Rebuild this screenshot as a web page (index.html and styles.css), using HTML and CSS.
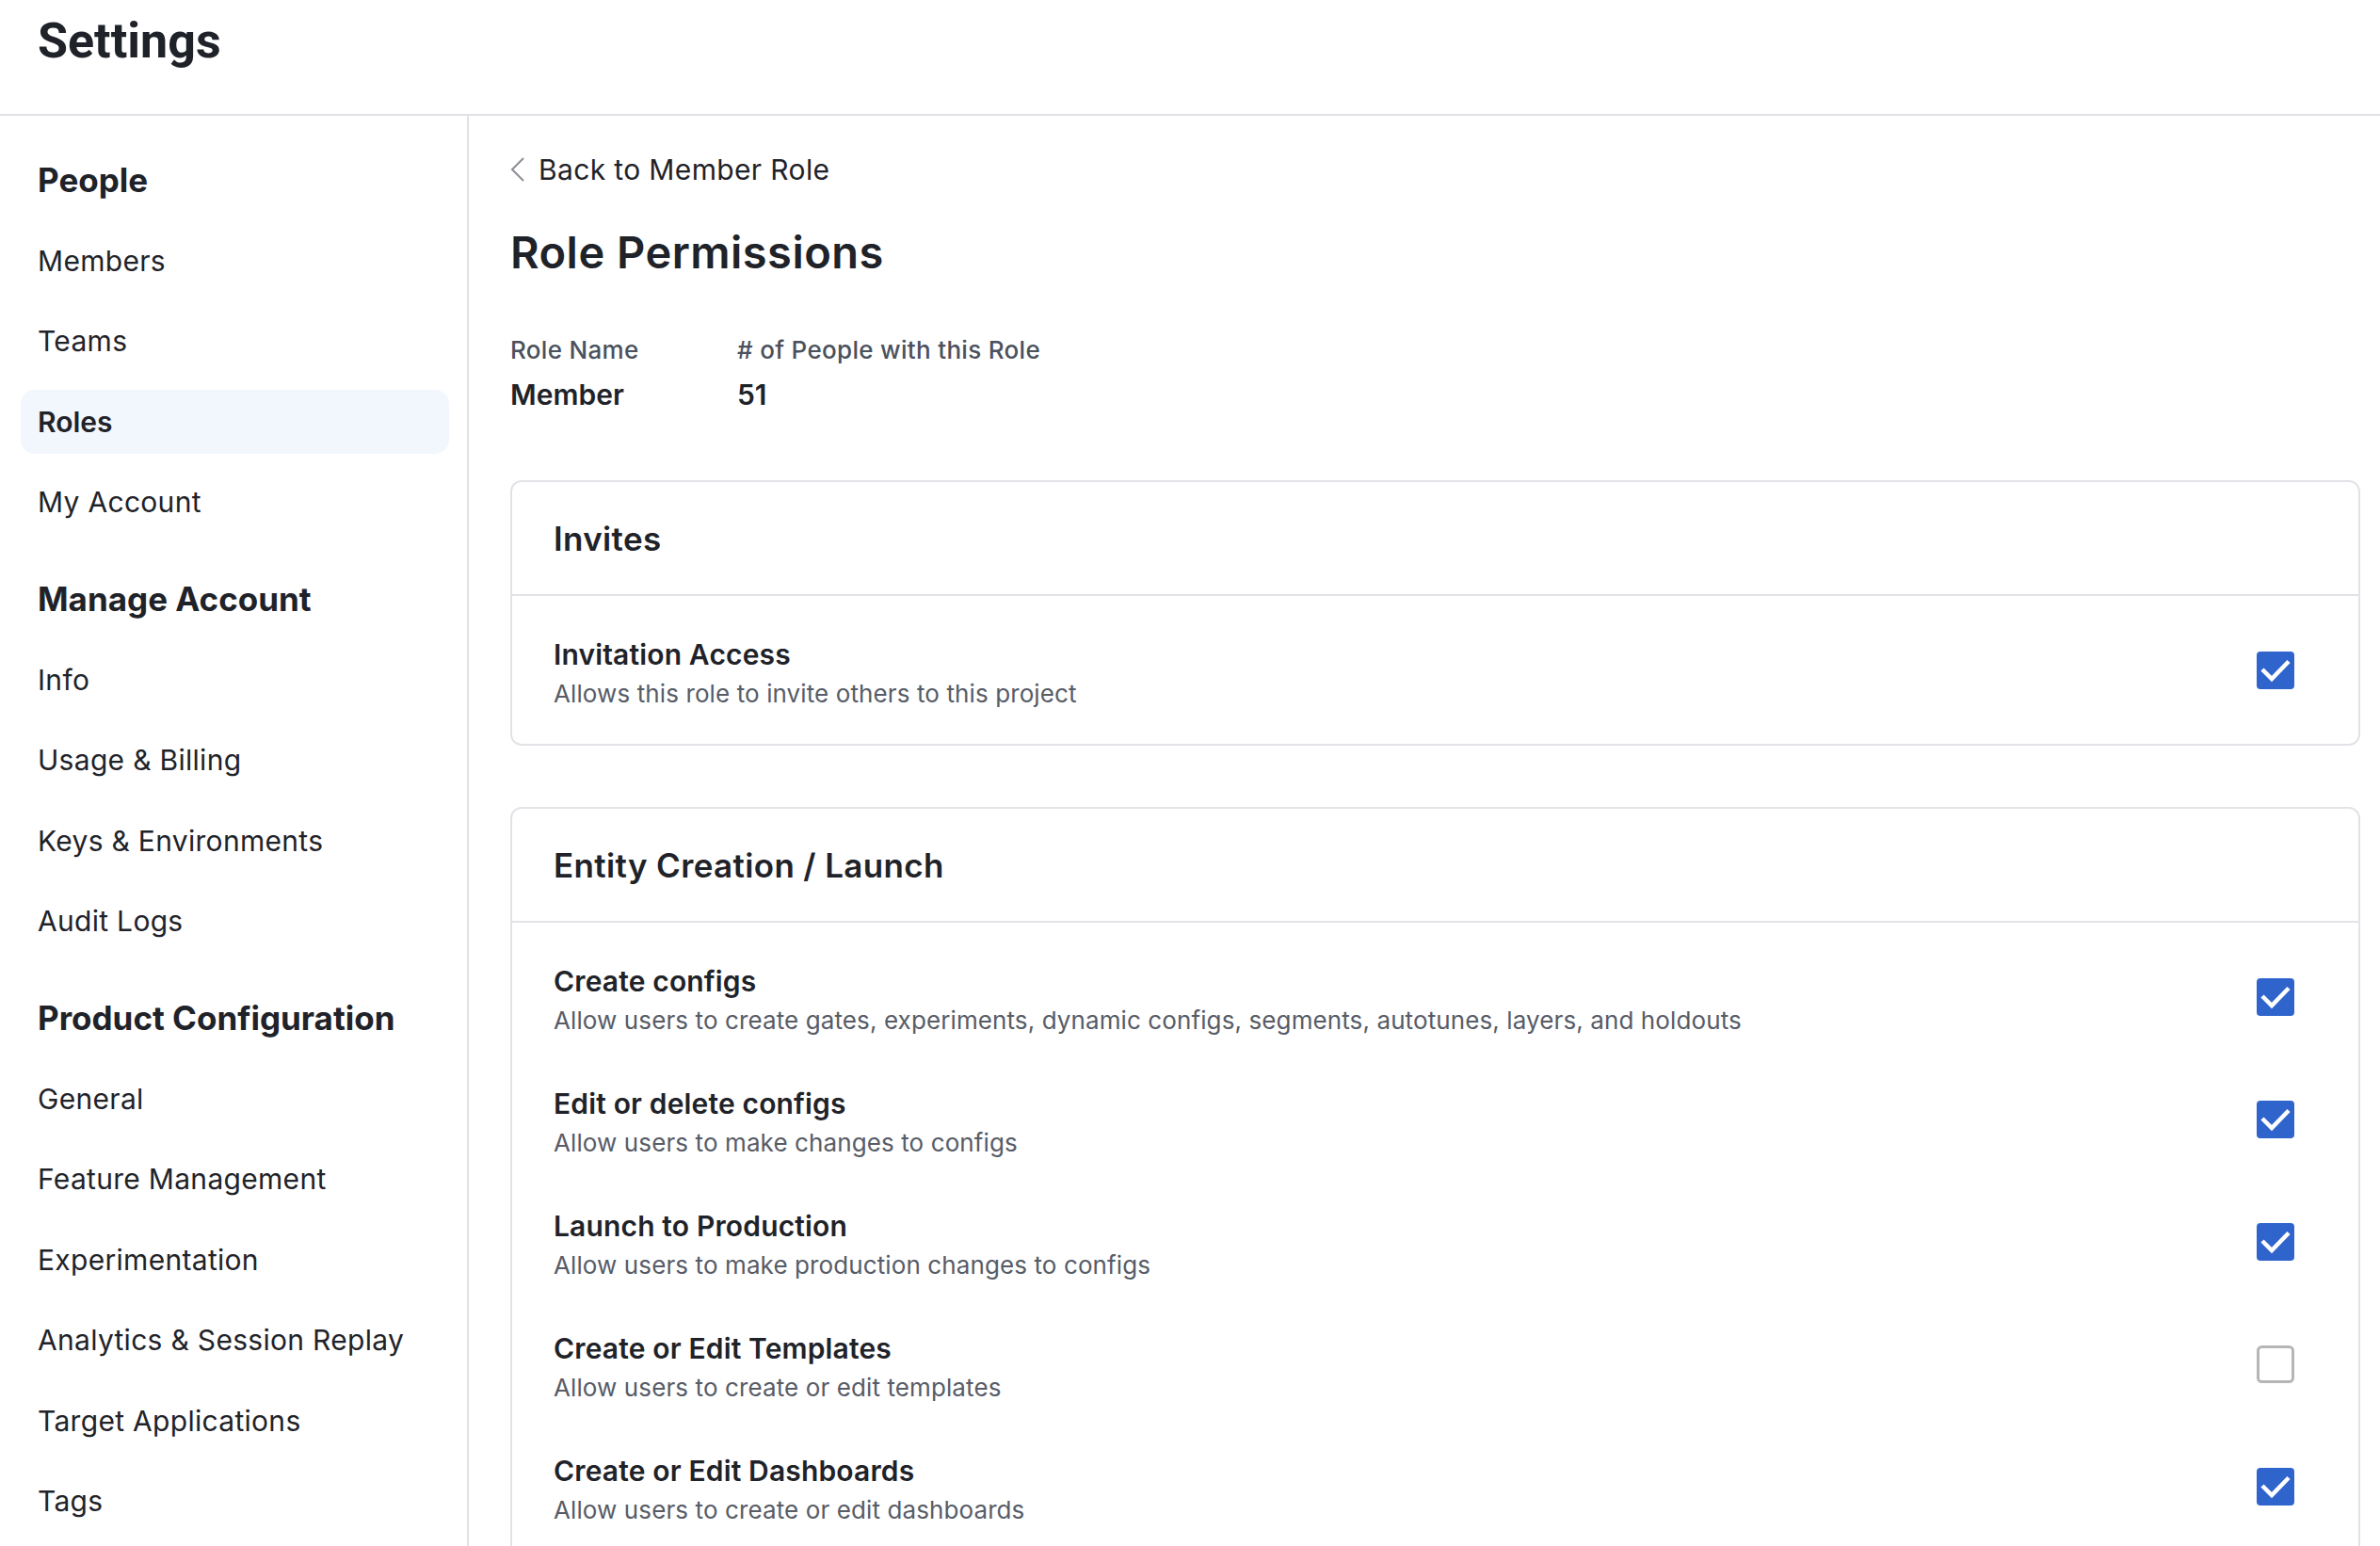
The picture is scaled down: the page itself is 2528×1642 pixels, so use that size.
FILE: index.html
```html
<!DOCTYPE html>
<html lang="en">
<head>
<meta charset="utf-8">
<title>Settings</title>
<link rel="stylesheet" href="styles.css">
</head>
<body>
<header class="topbar">
  <h1 class="page-title">Settings</h1>
</header>
<div class="layout">
  <nav class="sidebar">
    <div class="nav-heading">People</div>
    <div class="nav-item">Members</div>
    <div class="nav-item">Teams</div>
    <div class="nav-item active">Roles</div>
    <div class="nav-item">My Account</div>
    <div class="nav-heading group">Manage Account</div>
    <div class="nav-item">Info</div>
    <div class="nav-item">Usage &amp; Billing</div>
    <div class="nav-item">Keys &amp; Environments</div>
    <div class="nav-item">Audit Logs</div>
    <div class="nav-heading group">Product Configuration</div>
    <div class="nav-item">General</div>
    <div class="nav-item">Feature Management</div>
    <div class="nav-item">Experimentation</div>
    <div class="nav-item">Analytics &amp; Session Replay</div>
    <div class="nav-item">Target Applications</div>
    <div class="nav-item">Tags</div>
  </nav>
  <main class="content">
    <div class="back-link">
      <svg class="chevron" width="16" height="26" viewBox="0 0 16 26"><polyline points="14,1 2,13 14,25" fill="none" stroke="#8b8e94" stroke-width="2"/></svg>
      <span>Back to Member Role</span>
    </div>
    <h2 class="section-title">Role Permissions</h2>
    <div class="meta">
      <div class="meta-col first">
        <div class="meta-label">Role Name</div>
        <div class="meta-value">Member</div>
      </div>
      <div class="meta-col">
        <div class="meta-label"># of People with this Role</div>
        <div class="meta-value">51</div>
      </div>
    </div>

    <section class="card">
      <div class="card-header">Invites</div>
      <div class="card-body">
        <div class="perm-row">
          <div class="perm-text">
            <div class="perm-title">Invitation Access</div>
            <div class="perm-desc">Allows this role to invite others to this project</div>
          </div>
          <svg class="checkbox" width="40" height="40" viewBox="0 0 40 40"><rect width="40" height="40" rx="4" fill="#3064cd"/><polyline points="6,19 16,29 34,10.5" fill="none" stroke="#fff" stroke-width="4.5"/></svg>
        </div>
      </div>
    </section>

    <section class="card">
      <div class="card-header">Entity Creation / Launch</div>
      <div class="card-body">
        <div class="perm-row">
          <div class="perm-text">
            <div class="perm-title">Create configs</div>
            <div class="perm-desc">Allow users to create gates, experiments, dynamic configs, segments, autotunes, layers, and holdouts</div>
          </div>
          <svg class="checkbox" width="40" height="40" viewBox="0 0 40 40"><rect width="40" height="40" rx="4" fill="#3064cd"/><polyline points="6,19 16,29 34,10.5" fill="none" stroke="#fff" stroke-width="4.5"/></svg>
        </div>
        <div class="perm-row">
          <div class="perm-text">
            <div class="perm-title">Edit or delete configs</div>
            <div class="perm-desc">Allow users to make changes to configs</div>
          </div>
          <svg class="checkbox" width="40" height="40" viewBox="0 0 40 40"><rect width="40" height="40" rx="4" fill="#3064cd"/><polyline points="6,19 16,29 34,10.5" fill="none" stroke="#fff" stroke-width="4.5"/></svg>
        </div>
        <div class="perm-row">
          <div class="perm-text">
            <div class="perm-title">Launch to Production</div>
            <div class="perm-desc">Allow users to make production changes to configs</div>
          </div>
          <svg class="checkbox" width="40" height="40" viewBox="0 0 40 40"><rect width="40" height="40" rx="4" fill="#3064cd"/><polyline points="6,19 16,29 34,10.5" fill="none" stroke="#fff" stroke-width="4.5"/></svg>
        </div>
        <div class="perm-row">
          <div class="perm-text">
            <div class="perm-title">Create or Edit Templates</div>
            <div class="perm-desc">Allow users to create or edit templates</div>
          </div>
          <svg class="checkbox" width="40" height="40" viewBox="0 0 40 40"><rect x="1.5" y="1.5" width="37" height="37" rx="4" fill="#fff" stroke="#b6b6b6" stroke-width="3"/></svg>
        </div>
        <div class="perm-row">
          <div class="perm-text">
            <div class="perm-title">Create or Edit Dashboards</div>
            <div class="perm-desc">Allow users to create or edit dashboards</div>
          </div>
          <svg class="checkbox" width="40" height="40" viewBox="0 0 40 40"><rect width="40" height="40" rx="4" fill="#3064cd"/><polyline points="6,19 16,29 34,10.5" fill="none" stroke="#fff" stroke-width="4.5"/></svg>
        </div>
      </div>
    </section>
  </main>
</div>
</body>
</html>
```

FILE: styles.css
```css
html, body {
  margin: 0;
  padding: 0;
  height: 100%;
  overflow: hidden;
  background: #ffffff;
}

body {
  font-family: Inter, "Noto Sans", sans-serif;
  color: #1f2329;
}

.topbar {
  height: 108px;
  padding-top: 13px;
  padding-left: 40px;
  border-bottom: 2px solid #e0e2e6;
}

.page-title {
  margin: 0;
  font-family: Roboto, Inter, sans-serif;
  font-weight: 700;
  font-size: 52px;
  line-height: 62px;
  color: #1f2329;
}

.layout {
  display: flex;
  height: calc(100% - 123px);
}

.sidebar {
  width: 455px;
  flex: none;
  padding: 34px 19px 0 22px;
  border-right: 2px solid #e0e2e6;
  display: flex;
  flex-direction: column;
  gap: 17.5px;
}

.nav-heading {
  height: 68px;
  line-height: 68px;
  padding-left: 18px;
  font-size: 35px;
  font-weight: 700;
  color: #1f2329;
}

.nav-heading.group {
  margin-top: 17.5px;
}

.nav-item {
  height: 68px;
  line-height: 68px;
  padding-left: 18px;
  font-size: 30px;
  font-weight: 400;
  letter-spacing: 0.01em;
  color: #1f2329;
  border-radius: 15px;
}

.nav-item.active {
  background: #f2f6fd;
  font-weight: 600;
  letter-spacing: 0;
}

.content {
  flex: 1;
  padding: 37px 21px 0 44px;
}

.back-link {
  display: flex;
  align-items: center;
  height: 40px;
  font-size: 30px;
  line-height: 40px;
  letter-spacing: 0.012em;
  color: #1f2329;
}

.chevron {
  margin-right: 14px;
}

.section-title {
  margin: 40px 0 0 0;
  font-size: 47px;
  line-height: 56px;
  font-weight: 600;
  letter-spacing: 0.01em;
  color: #1f2329;
}

.meta {
  display: flex;
  margin-top: 60px;
}

.meta-col.first {
  width: 241px;
}

.meta-label {
  font-size: 26px;
  line-height: 32px;
  font-weight: 500;
  letter-spacing: 0.012em;
  color: #4b515d;
}

.meta-value {
  margin-top: 11px;
  font-size: 30px;
  line-height: 40px;
  font-weight: 600;
  color: #1f2329;
}

.card {
  border: 2px solid #e1e3e7;
  border-radius: 12px;
  margin-top: 71px;
}

.card + .card {
  margin-top: 65px;
}

.card-header {
  height: 119px;
  display: flex;
  align-items: center;
  padding-left: 44px;
  font-size: 35px;
  font-weight: 600;
  letter-spacing: 0.01em;
  color: #1f2329;
  border-bottom: 2px solid #e1e3e7;
}

.card-body {
  padding: 14px 0 13px 0;
}

.perm-row {
  display: flex;
  align-items: center;
  justify-content: space-between;
  padding: 25px 68px 25px 44px;
  height: 80px;
}

.perm-text {
  padding-top: 6px;
}

.perm-title {
  font-size: 30px;
  line-height: 40px;
  font-weight: 600;
  letter-spacing: 0.005em;
  color: #1f2329;
}

.perm-desc {
  margin-top: 4px;
  font-size: 26px;
  line-height: 36px;
  letter-spacing: 0.004em;
  color: #575c67;
}

.checkbox {
  flex: none;
  display: block;
}
```
